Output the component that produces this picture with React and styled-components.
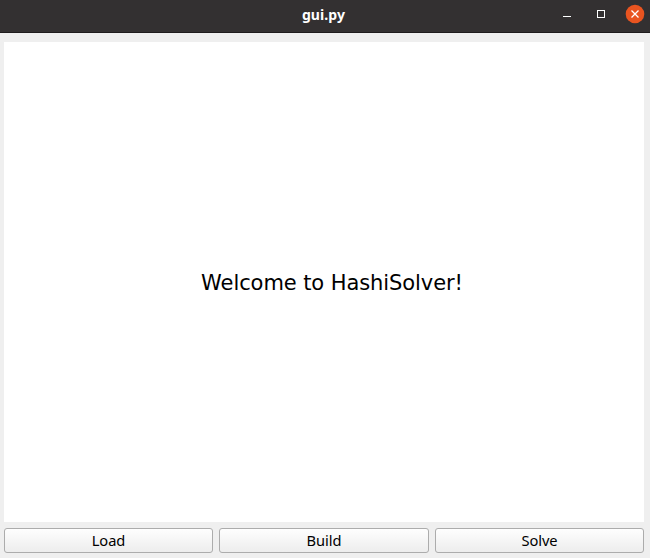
import React from "react";
import styled, { createGlobalStyle } from "styled-components";

const GlobalStyle = createGlobalStyle`
  * { box-sizing: border-box; }
  body { margin: 0; background: #efefef; overflow: hidden; }
`;

const Window = styled.div`
  display: flex;
  flex-direction: column;
  width: 650px;
  height: 558px;
  background: #efefef;
`;

const TitleBar = styled.header`
  display: grid;
  grid-template-columns: 1fr auto 1fr;
  height: 33px;
  background: #333031;
  border-bottom: 1px solid #1e1c1d;
`;

const Title = styled.h1`
  grid-column: 2;
  margin: 0;
  padding-right: 3px;
  font: 700 14px/30px "Noto Sans", sans-serif;
  letter-spacing: 0.1px;
  color: #fff;
`;

const WindowControls = styled.div`
  justify-self: end;
  display: flex;
  padding: 4px 5px 0 0;
  gap: 14px;
`;

const ControlButton = styled.button`
  width: 20px;
  height: 20px;
  padding: 0;
  border: 0;
  background: none;
  svg { display: block; }
`;

const Content = styled.main`
  display: flex;
  flex-direction: column;
  gap: 6px;
  padding: 9px 6px 5px 4px;
`;

const Canvas = styled.section`
  display: flex;
  align-items: center;
  justify-content: center;
  height: 480px;
  padding: 2px 0 0 16px;
  background: #fff;
`;

const Welcome = styled.p`
  margin: 0;
  font: 21px/26px "DejaVu Sans", sans-serif;
  letter-spacing: -0.08px;
  color: #000;
  white-space: nowrap;
`;

const ButtonRow = styled.div`
  display: grid;
  grid-template-columns: 209px 210px 209px;
  gap: 6px;
`;

const ActionButton = styled.button`
  height: 25px;
  padding: 0;
  border: 1px solid #acacac;
  border-radius: 3px;
  background: linear-gradient(#fefefe, #ededed);
  font: 14.67px/23px "Noto Sans", sans-serif;
  letter-spacing: -0.05px;
  color: #000;
`;

const ACTIONS = ["Load", "Build", "Solve"];

export default function App() {
  return (
    <>
      <GlobalStyle />
      <Window>
        <TitleBar>
          <Title>gui.py</Title>
          <WindowControls>
            <ControlButton aria-label="Minimize">
              <svg width="20" height="20" shapeRendering="crispEdges">
                <path d="M6 12h8v1H6z" fill="#fff" />
              </svg>
            </ControlButton>
            <ControlButton aria-label="Maximize">
              <svg width="20" height="20" shapeRendering="crispEdges">
                <path d="M6.5 6.5h7v7h-7z" fill="none" stroke="#fff" />
              </svg>
            </ControlButton>
            <ControlButton aria-label="Close">
              <svg width="20" height="20">
                <circle cx="10" cy="10" r="9.3" fill="#e95420" />
                <path d="M6.5 6.5l7 7m0-7l-7 7" stroke="#fff" strokeWidth="1.3" />
              </svg>
            </ControlButton>
          </WindowControls>
        </TitleBar>
        <Content>
          <Canvas>
            <Welcome>Welcome to HashiSolver!</Welcome>
          </Canvas>
          <ButtonRow>
            {ACTIONS.map((label) => (
              <ActionButton key={label}>{label}</ActionButton>
            ))}
          </ButtonRow>
        </Content>
      </Window>
    </>
  );
}
